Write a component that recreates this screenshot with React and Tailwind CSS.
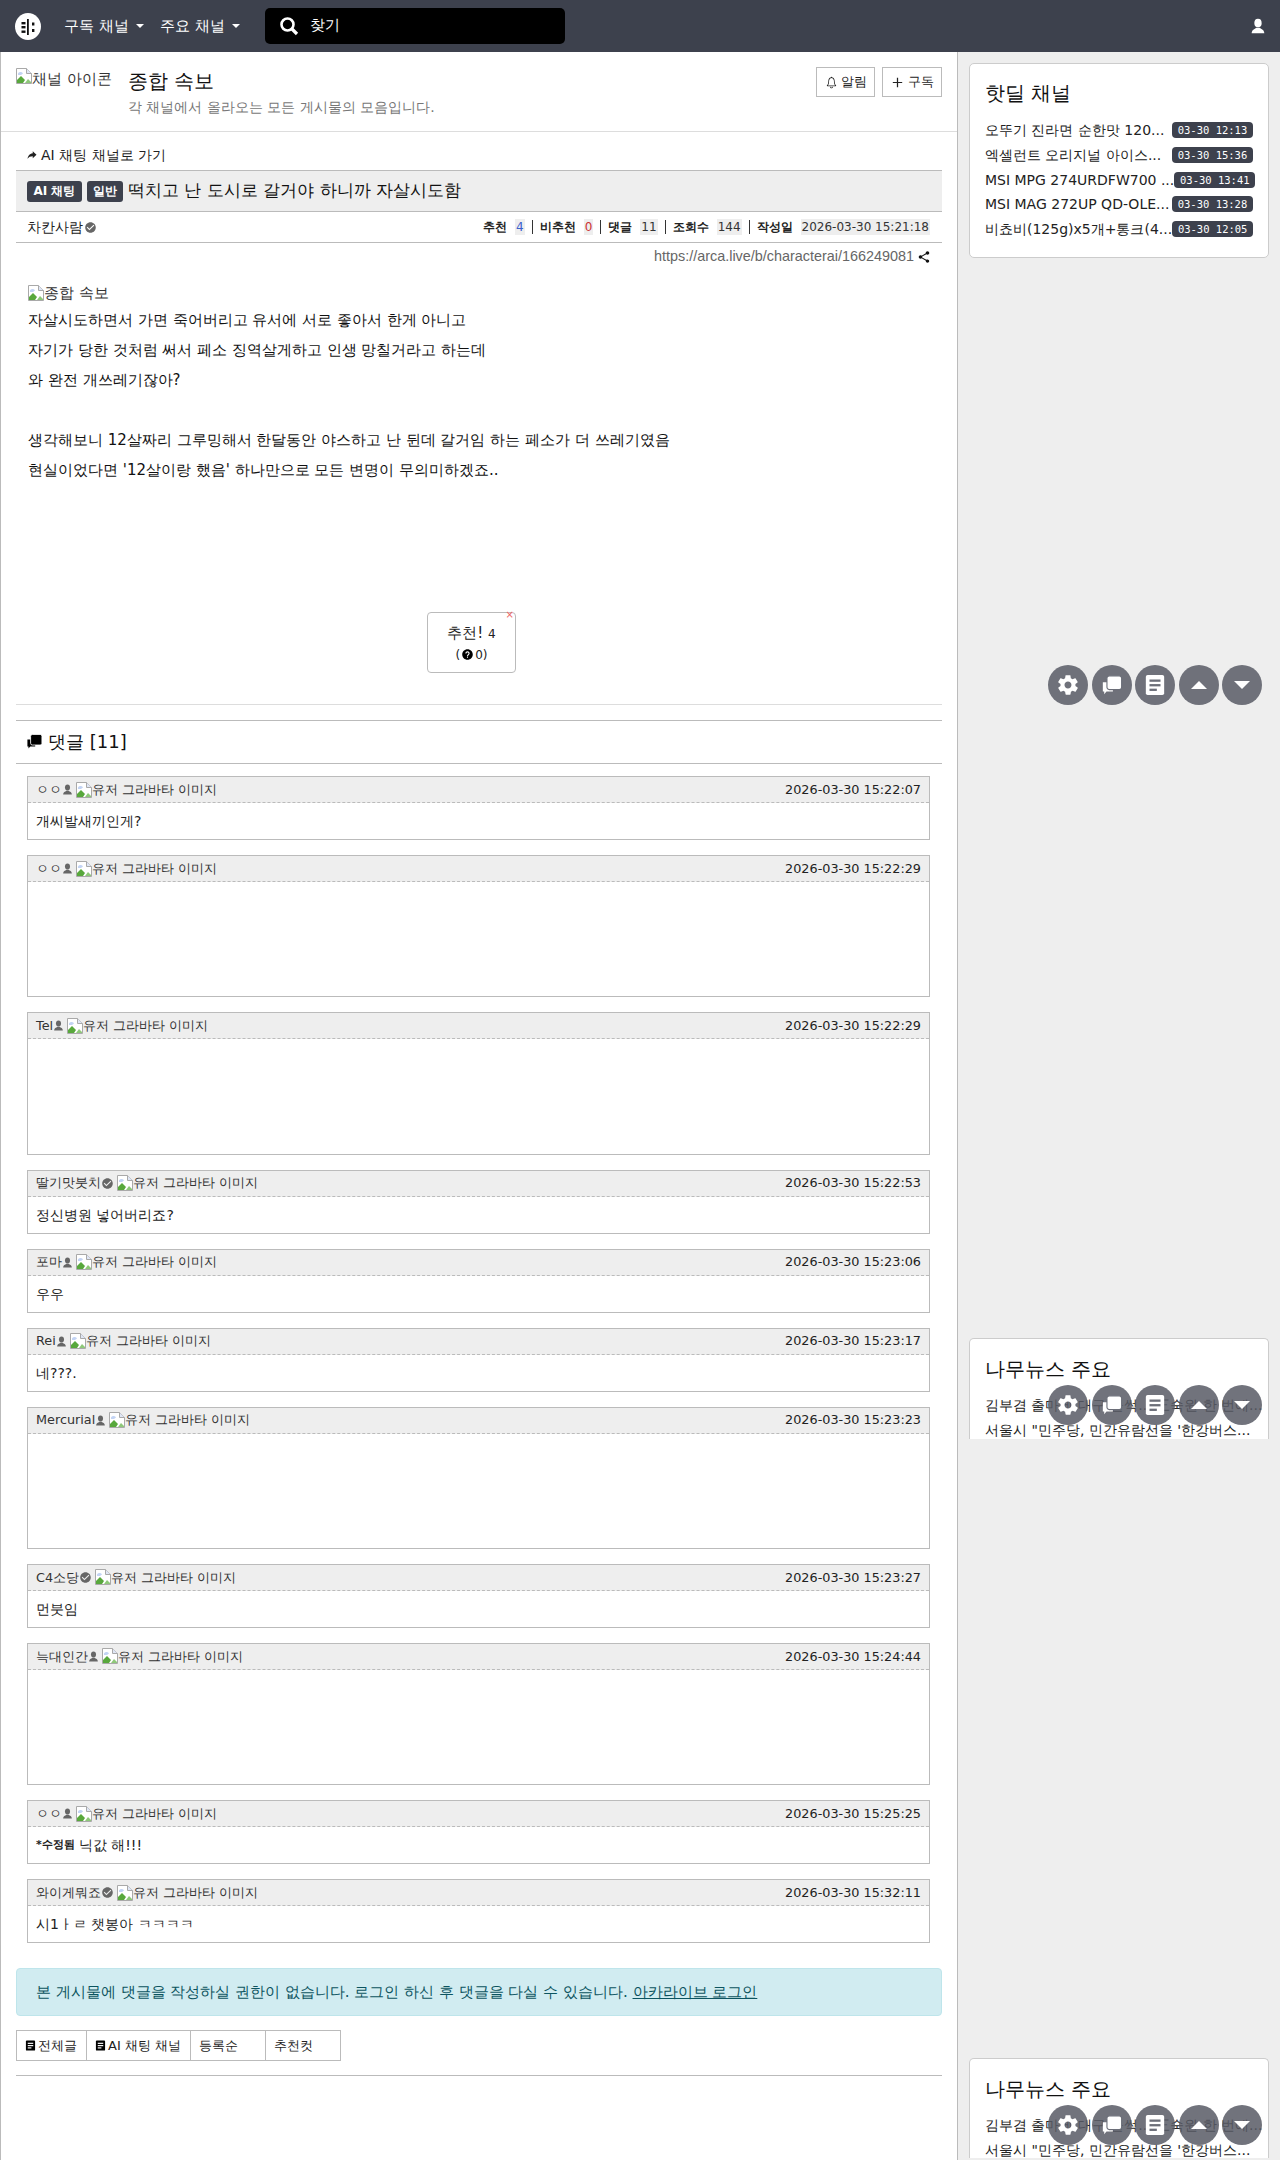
import React from "react";
import {
  IoMdSettings,
  IoMdShare,
  IoMdAdd,
  IoMdHelpCircle,
  IoIosNotificationsOutline,
  IoMdCheckmarkCircle,
  IoMdShareAlt,
} from "react-icons/io";

const font = { fontFamily: '"DejaVu Sans", sans-serif' };

const hotdeals = [
  ["오뚜기 진라면 순한맛 120...", "03-30 12:13"],
  ["엑셀런트 오리지널 아이스...", "03-30 15:36"],
  ["MSI MPG 274URDFW700 ...", "03-30 13:41"],
  ["MSI MAG 272UP QD-OLE...", "03-30 13:28"],
  ["비쵸비(125g)x5개+통크(4...", "03-30 12:05"],
];

const comments = [
  { name: "ㅇㅇ", icon: "person", time: "2026-03-30 15:22:07", text: "개씨발새끼인게?" },
  { name: "ㅇㅇ", icon: "person", time: "2026-03-30 15:22:29" },
  { name: "Tel", icon: "person", time: "2026-03-30 15:22:29" },
  { name: "딸기맛붓치", icon: "check", time: "2026-03-30 15:22:53", text: "정신병원 넣어버리죠?" },
  { name: "포마", icon: "person", time: "2026-03-30 15:23:06", text: "우우" },
  { name: "Rei", icon: "person", time: "2026-03-30 15:23:17", text: "네???." },
  { name: "Mercurial", icon: "person", time: "2026-03-30 15:23:23" },
  { name: "C4소당", icon: "check", time: "2026-03-30 15:23:27", text: "먼붓임" },
  { name: "늑대인간", icon: "person", time: "2026-03-30 15:24:44" },
  { name: "ㅇㅇ", icon: "person", time: "2026-03-30 15:25:25", text: "닉값 해!!!", edited: true },
  { name: "와이게뭐죠", icon: "check", time: "2026-03-30 15:32:11", text: "시1ㅏㄹ 챗봉아 ㅋㅋㅋㅋ" },
];

function BrokenImage() {
  return (
    <svg width="16" height="16" viewBox="0 0 16 16" className="inline-block shrink-0">
      <path d="M0.5 0.5H10.5L15.5 5.5V15.5H0.5Z" fill="#fff" stroke="#a9a9a9" />
      <path d="M10.5 0.5V5.5H15.5" fill="#dfe6f5" stroke="#a9a9a9" />
      <path d="M2 5.5C3 3.5 6 3.5 7 5.5L5 7L2 7Z" fill="#c3d4f4" />
      <path d="M1 15V12L5 8L9 12L7 15Z" fill="#58a83c" />
      <path d="M9 15L12 11L15 14V15Z" fill="#8ec879" />
    </svg>
  );
}

function Logo() {
  return (
    <svg width="26" height="27" viewBox="0 0 26 27" className="shrink-0">
      <ellipse cx="13" cy="13.5" rx="13" ry="13.5" fill="#fff" />
      <rect x="6.5" y="9" width="4" height="2.4" fill="#111" />
      <rect x="6.5" y="13" width="4" height="2.4" fill="#111" />
      <rect x="6.5" y="17.5" width="4" height="2.4" fill="#111" />
      <rect x="12" y="6" width="1.8" height="16" fill="#111" />
      <rect x="17" y="9.5" width="2.4" height="3" fill="#111" />
      <rect x="17" y="16" width="2.4" height="3" fill="#111" />
    </svg>
  );
}

function DocIcon({ size = 12, color = "#000", line = "#fff" }) {
  return (
    <svg width={size} height={size} viewBox="0 0 24 24" className="inline-block shrink-0">
      <rect x="2" y="1" width="20" height="22" rx="2" fill={color} />
      <rect x="6" y="6" width="12" height="2.5" fill={line} />
      <rect x="6" y="11" width="12" height="2.5" fill={line} />
      <rect x="6" y="16" width="8" height="2.5" fill={line} />
    </svg>
  );
}

function PersonIcon({ size = 12, className = "" }) {
  return (
    <svg width={size} height={size} viewBox="0 0 24 24" fill="currentColor" className={`inline-block shrink-0 ${className}`}>
      <ellipse cx="12" cy="7.5" rx="5.5" ry="6.5" />
      <path d="M2.5 23C2.5 17.5 7 16.5 9.5 14.5H14.5C17 16.5 21.5 17.5 21.5 23Z" />
    </svg>
  );
}

function ChatsIcon({ size = 22, color = "#fff", gap = "#6b6e78" }) {
  return (
    <svg width={size} height={size} viewBox="0 0 24 24" className="inline-block shrink-0">
      <path d="M2 9H13V19H6L3.5 22V19H2Z" fill={color} />
      <rect x="6.5" y="2" width="16" height="15" rx="2.5" fill={color} stroke={gap} strokeWidth="1.2" />
    </svg>
  );
}

function Caret() {
  return <span className="ml-[7px] inline-block h-0 w-0 border-x-[4px] border-t-[4px] border-x-transparent border-t-white" />;
}

function Stat({ label, value, color = "text-[#333]", bg = "bg-[#eee]", last }) {
  return (
    <>
      <span className="text-xs font-bold text-[#222]">{label}</span>
      <span className={`ml-[8px] px-[1px] text-xs ${color} ${bg}`}>{value}</span>
      {!last && <span className="mx-[7px] h-[14px] w-[1px] bg-[#333]" />}
    </>
  );
}

function Comment({ c }) {
  return (
    <div className="mb-[15px] border border-[#bbb]">
      <div className="flex h-[26px] items-center justify-between border-b border-dashed border-[#bbb] bg-[#eee] pl-2 pr-2 text-[12.8px] text-[#333]">
        <div className="flex items-center">
          <span>{c.name}</span>
          {c.icon === "person" ? (
            <PersonIcon size={11} className="text-[#666]" />
          ) : (
            <IoMdCheckmarkCircle className="text-[13px] text-[#666]" />
          )}
          <span className="ml-[3px] flex items-center">
            <BrokenImage />
            유저 그라바타 이미지
          </span>
        </div>
        <span className="text-[#222]">{c.time}</span>
      </div>
      {c.text ? (
        <div className="flex h-[36px] items-center px-2 text-sm text-[#222]">
          {c.edited && <span className="mr-1 text-[11px] font-bold">*수정됨</span>}
          {c.text}
        </div>
      ) : (
        <div className="h-[114.25px]" />
      )}
    </div>
  );
}

function SideCard({ title, className, children }) {
  return (
    <div className={`mx-[11px] rounded-t-[5px] border border-[#ccc] bg-white px-[15px] pt-4 ${className}`}>
      <div className="mb-[10px] text-[20px] leading-[28px] text-[#111]">{title}</div>
      {children}
    </div>
  );
}

function NewsRows() {
  return (
    <div className="text-sm text-[#222]">
      <div className="h-[25px] whitespace-nowrap leading-[25px]">김부겸 출마에 대구 들썩... 三숙원 한 번에...</div>
      <div className="h-[25px] whitespace-nowrap leading-[25px]">서울시 "민주당, 민간유람선을 '한강버스...</div>
    </div>
  );
}

function FloatButtons({ top }) {
  const circle = "flex h-10 w-10 items-center justify-center rounded-full bg-[#585b65]/85 text-white";
  return (
    <div className={`absolute left-[1048px] flex gap-[3.5px] ${top}`}>
      <div className={circle}>
        <IoMdSettings className="text-[24px]" />
      </div>
      <div className={circle}>
        <ChatsIcon size={22} />
      </div>
      <div className={circle}>
        <DocIcon size={22} color="#fff" line="#6b6e78" />
      </div>
      <div className={circle}>
        <span className="h-0 w-0 border-x-[8px] border-b-[8px] border-x-transparent border-b-white" />
      </div>
      <div className={circle}>
        <span className="h-0 w-0 border-x-[8px] border-t-[8px] border-x-transparent border-t-white" />
      </div>
    </div>
  );
}

export default function App() {
  return (
    <div className="relative h-[2160px] w-[1280px] overflow-hidden bg-[#eee]" style={font}>
      {/* top bar */}
      <header className="flex h-[52px] items-center bg-[#3d414d] text-white">
        <div className="ml-[15px]">
          <Logo />
        </div>
        <div className="ml-[23px] flex items-center text-[15px]">
          구독 채널
          <Caret />
        </div>
        <div className="ml-4 flex items-center text-[15px]">
          주요 채널
          <Caret />
        </div>
        <div className="ml-[25px] flex h-9 w-[300px] items-center rounded-[5px] bg-black pl-[14px] text-[15px]">
          <svg width="20" height="20" viewBox="0 0 20 20">
            <circle cx="8.5" cy="8.5" r="6" fill="none" stroke="#fff" strokeWidth="2.6" />
            <path d="M13 13L18 18" stroke="#fff" strokeWidth="3.2" />
          </svg>
          <span className="ml-[11px] pb-[2px]">찾기</span>
        </div>
        <PersonIcon size={16} className="ml-auto mr-[14px]" />
      </header>

      <div className="flex h-[2108px]">
        {/* main column */}
        <main className="h-full w-[958px] shrink-0 border-x border-[#bbb] bg-white">
          <div className="flex h-[80px] border-b border-[#ddd] px-[15px]">
            <div className="mt-[16px] flex h-5 w-[96px] items-start overflow-hidden whitespace-nowrap text-[15px] text-[#333]">
              <BrokenImage />
              채널 아이콘
            </div>
            <div className="ml-4 mt-[15px]">
              <div className="text-[20px] leading-[28px] text-[#111]">종합 속보</div>
              <div className="mt-[2px] text-sm text-[#777]">각 채널에서 올라오는 모든 게시물의 모음입니다.</div>
            </div>
            <div className="ml-auto mt-[15px] flex gap-[7px] text-[13px] text-[#222]">
              <button className="flex h-[30px] w-[59px] items-center justify-center border border-[#bbb]">
                <IoIosNotificationsOutline className="mr-[2px] text-[15px]" />
                알림
              </button>
              <button className="flex h-[30px] w-[60px] items-center justify-center border border-[#bbb]">
                <IoMdAdd className="mr-[3px] text-[15px]" />
                구독
              </button>
            </div>
          </div>

          <div className="px-[15px]">
            <div className="flex h-[38px] items-center pl-[10px] pt-[8px] text-sm text-[#222]">
              <IoMdShareAlt className="mr-[3px] text-[12px]" />
              AI 채팅 채널로 가기
            </div>
            <div className="flex h-[42px] items-center border-y border-[#bbb] bg-[#eee] pl-[11px]">
              <span className="flex h-[21px] w-[55px] items-center justify-center rounded-[3px] bg-[#3d414d] text-xs font-bold text-white">AI 채팅</span>
              <span className="ml-[5px] flex h-[21px] w-9 items-center justify-center rounded-[3px] bg-[#3d414d] text-xs font-bold text-white">일반</span>
              <span className="ml-[5px] text-[17px] text-[#111]">떡치고 난 도시로 갈거야 하니까 자살시도함</span>
            </div>
            <div className="flex h-[31px] items-center justify-between border-b border-[#bbb] pl-[11px] pr-[12px]">
              <div className="flex items-center text-sm text-[#222]">
                차칸사람
                <IoMdCheckmarkCircle className="ml-[1px] text-[13px] text-[#666]" />
              </div>
              <div className="flex items-center">
                <Stat label="추천" value="4" color="text-[#3a5fcd]" />
                <Stat label="비추천" value="0" color="text-[#c33]" />
                <Stat label="댓글" value="11" />
                <Stat label="조회수" value="144" />
                <Stat label="작성일" value="2026-03-30 15:21:18" last />
              </div>
            </div>
            <div className="flex h-[24px] items-center justify-end pr-[11px] pt-[3px] font-['Liberation_Sans'] text-[14.4px] text-[#666]">
              https://arca.live/b/characterai/166249081
              <IoMdShare className="ml-[3px] text-[14px] text-[#111]" />
            </div>

            <div className="pl-[12px] pt-[16px] text-[15px] leading-[30px] text-[#111]">
              <div className="flex h-[20px] items-center leading-[20px] text-[#333]">
                <BrokenImage />
                종합 속보
              </div>
              <div className="mt-[2px]">자살시도하면서 가면 죽어버리고 유서에 서로 좋아서 한게 아니고</div>
              <div>자기가 당한 것처럼 써서 페소 징역살게하고 인생 망칠거라고 하는데</div>
              <div>와 완전 개쓰레기잖아?</div>
              <div className="h-[30px]" />
              <div>생각해보니 12살짜리 그루밍해서 한달동안 야스하고 난 뒨데 갈거임 하는 페소가 더 쓰레기였음</div>
              <div>현실이었다면 '12살이랑 했음' 하나만으로 모든 변명이 무의미하겠죠..</div>
            </div>

            <div className="relative ml-[411px] mt-[127px] flex h-[61px] w-[89px] flex-col items-center justify-center rounded-[4px] border border-[#bbb] text-[#222]">
              <span className="absolute right-[1px] top-[-3px] text-[10px] leading-[10px] text-[#e66]">×</span>
              <div className="text-[15px] leading-[24px]">
                추천! <span className="text-xs">4</span>
              </div>
              <div className="flex items-center text-xs leading-[20px]">
                (<IoMdHelpCircle className="mx-[1px] text-[13px] text-black" /> 0)
              </div>
            </div>

            <div className="mt-[31px] border-t border-[#ddd]" />
            <div className="mt-[15px] flex h-[44px] items-center border-y border-[#bbb] pb-[2px] pl-[10px] text-[18px] text-[#111]">
              <span className="mr-[5px] flex">
                <ChatsIcon size={17} color="#000" gap="#fff" />
              </span>
              댓글 [11]
            </div>

            <div className="ml-[11px] mr-[12px] mt-[12px]">
              {comments.map((c, i) => (
                <Comment key={i} c={c} />
              ))}
            </div>

            <div className="mt-[25px] flex h-[48px] items-center rounded-[4px] border border-[#bee5eb] bg-[#d1ecf1] pl-[19px] text-[15px] text-[#0c5460]">
              본 게시물에 댓글을 작성하실 권한이 없습니다. 로그인 하신 후 댓글을 다실 수 있습니다.&nbsp;
              <span className="underline">아카라이브 로그인</span>
            </div>

            <div className="mt-[14px] flex text-[13px] text-[#222]">
              <div className="flex h-[31px] w-[71px] items-center border border-[#bbb] pl-2">
                <DocIcon size={11} />
                <span className="ml-[2px]">전체글</span>
              </div>
              <div className="ml-[-1px] flex h-[31px] w-[105px] items-center border border-[#bbb] pl-2">
                <DocIcon size={11} />
                <span className="ml-[2px]">AI 채팅 채널</span>
              </div>
              <div className="ml-[-1px] flex h-[31px] w-[76px] items-center border border-[#bbb] pl-2">등록순</div>
              <div className="ml-[-1px] flex h-[31px] w-[76px] items-center border border-[#bbb] pl-2">추천컷</div>
            </div>
            <div className="mt-[14px] border-t border-[#bbb]" />
          </div>
        </main>

        {/* sidebar */}
        <aside className="min-w-0 flex-1">
          <div className="mx-[11px] mt-[11px] rounded-[5px] border border-[#ccc] bg-white px-[15px] pb-4 pt-[15px]">
            <div className="mb-[11px] text-[20px] leading-[28px] text-[#111]">핫딜 채널</div>
            {hotdeals.map(([title, time], i) => (
              <div key={i} className="flex h-[24.7px] items-center justify-between text-sm text-[#222]">
                <span className="whitespace-nowrap">{title}</span>
                <span className="h-4 w-[81px] shrink-0 rounded-[4px] bg-[#3d414d] text-center font-['DejaVu_Sans_Mono'] text-[10.5px] leading-4 text-white">{time}</span>
              </div>
            ))}
          </div>
          <SideCard title="나무뉴스 주요" className="mt-[1080px] h-[101px] overflow-hidden border-b-0">
            <NewsRows />
          </SideCard>
          <SideCard title="나무뉴스 주요" className="mt-[619px] h-[100px] overflow-hidden border-b-0">
            <NewsRows />
          </SideCard>
        </aside>
      </div>

      <FloatButtons top="top-[665px]" />
      <FloatButtons top="top-[1385px]" />
      <FloatButtons top="top-[2105px]" />
    </div>
  );
}
